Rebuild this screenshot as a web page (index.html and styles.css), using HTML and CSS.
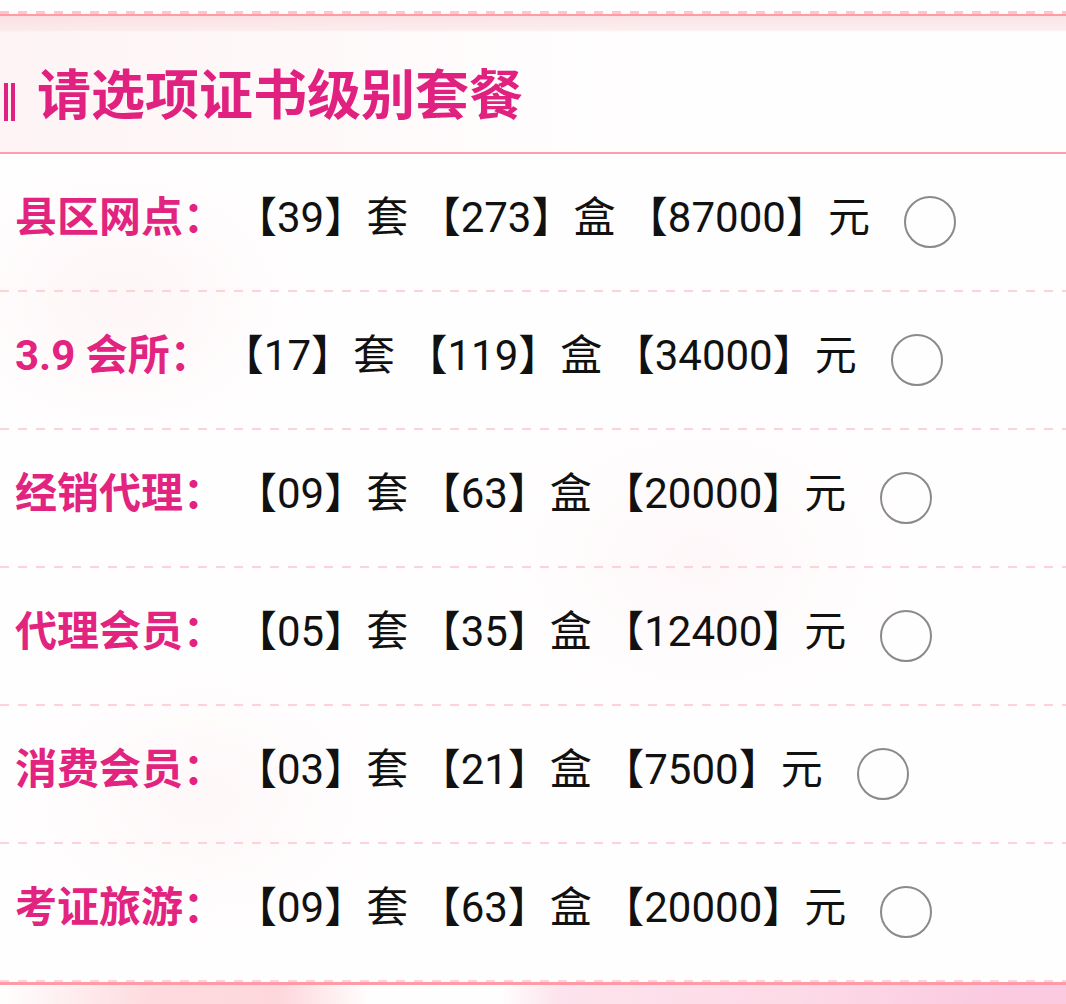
FILE: index.html
```html
<!DOCTYPE html>
<html lang="zh-CN">
<head>
<meta charset="utf-8">
<title>请选项证书级别套餐</title>
<link rel="stylesheet" href="styles.css">
</head>
<body>
<div class="page">
  <div class="top-dash"></div>
  <section class="panel">
    <header class="head">
      <span class="bar"></span>
      <h1 class="title">请选项证书级别套餐</h1>
    </header>
    <ul class="list">
      <li class="row"><span class="label">县区网点：</span><span class="info">【39】套 【273】盒 【87000】元</span><span class="radio"></span></li>
      <li class="row"><span class="label">3.9 会所：</span><span class="info">【17】套 【119】盒 【34000】元</span><span class="radio"></span></li>
      <li class="row"><span class="label">经销代理：</span><span class="info">【09】套 【63】盒 【20000】元</span><span class="radio"></span></li>
      <li class="row"><span class="label">代理会员：</span><span class="info">【05】套 【35】盒 【12400】元</span><span class="radio"></span></li>
      <li class="row"><span class="label">消费会员：</span><span class="info">【03】套 【21】盒 【7500】元</span><span class="radio"></span></li>
      <li class="row"><span class="label">考证旅游：</span><span class="info">【09】套 【63】盒 【20000】元</span><span class="radio"></span></li>
    </ul>
  </section>
  <div class="bottom-wash"></div>
</div>
</body>
</html>
```
FILE: styles.css
```css
* { box-sizing: border-box; }
html, body { margin: 0; padding: 0; }
body {
  width: 1066px;
  height: 1004px;
  overflow: hidden;
  font-family: Roboto, "Noto Sans CJK SC", sans-serif;
  background:
    radial-gradient(ellipse 260px 200px at 120px 300px, rgba(250, 225, 230, 0.3), transparent 70%),
    radial-gradient(ellipse 300px 220px at 700px 560px, rgba(250, 228, 234, 0.25), transparent 70%),
    radial-gradient(ellipse 280px 200px at 200px 800px, rgba(250, 228, 232, 0.25), transparent 70%),
    #fffefe;
}
.page { display: flex; flex-direction: column; }
.top-dash {
  height: 3px;
  margin-top: 11px;
  background: repeating-linear-gradient(90deg, #ffc4cc 0 9px, transparent 9px 18px);
}
.panel {
  border-top: 2px solid #ff9ba6;
  border-bottom: 3px solid #ff9ba6;
}
.head {
  height: 138px;
  padding-top: 16px;
  border-bottom: 2px solid #ff9da8;
  display: flex;
  align-items: center;
  background:
    linear-gradient(180deg, rgba(250, 218, 222, 0.75) 0, rgba(250, 225, 228, 0.55) 14px, rgba(255, 250, 250, 0) 16px),
    linear-gradient(90deg, rgba(252, 236, 238, 0.6), rgba(255, 255, 255, 0) 60%);
}
.bar {
  width: 11px;
  height: 38px;
  margin: 20px 22px 0 4px;
  border-left: 4px solid #e0217f;
  border-right: 4px solid #e0217f;
}
.title {
  margin: 0;
  font-size: 54px;
  font-weight: 700;
  color: #e0217f;
  font-family: "Noto Sans CJK SC", sans-serif;
  line-height: 1;
}
.list { list-style: none; margin: 0; padding: 0; }
.row {
  height: 138px;
  padding: 0 0 2px 15px;
  display: flex;
  align-items: center;
  background: repeating-linear-gradient(90deg, #ffd2d8 0 9px, transparent 9px 18px) left bottom / 100% 2px no-repeat;
}
.label {
  font-size: 42px;
  font-weight: 700;
  color: #e2237f;
  margin: 0 10px 18px 0;
  white-space: pre;
}
.info {
  font-size: 42px;
  color: #111;
  white-space: pre;
  margin-bottom: 18px;
}
.radio {
  width: 52px;
  height: 52px;
  margin-left: 34px;
  border: 2.5px solid #8a8a8a;
  border-radius: 50%;
  flex: none;
}
.bottom-wash {
  height: 20px;
  background:
    linear-gradient(90deg, rgba(255,255,255,0) 0, rgba(253, 210, 214, 0.8) 150px, rgba(253, 205, 210, 0.8) 280px, rgba(255,255,255,0.4) 370px, rgba(255,255,255,0) 500px, rgba(252, 220, 232, 0.8) 560px, rgba(252, 214, 228, 0.9) 800px, rgba(250, 196, 220, 0.9) 1000px);
}
```
